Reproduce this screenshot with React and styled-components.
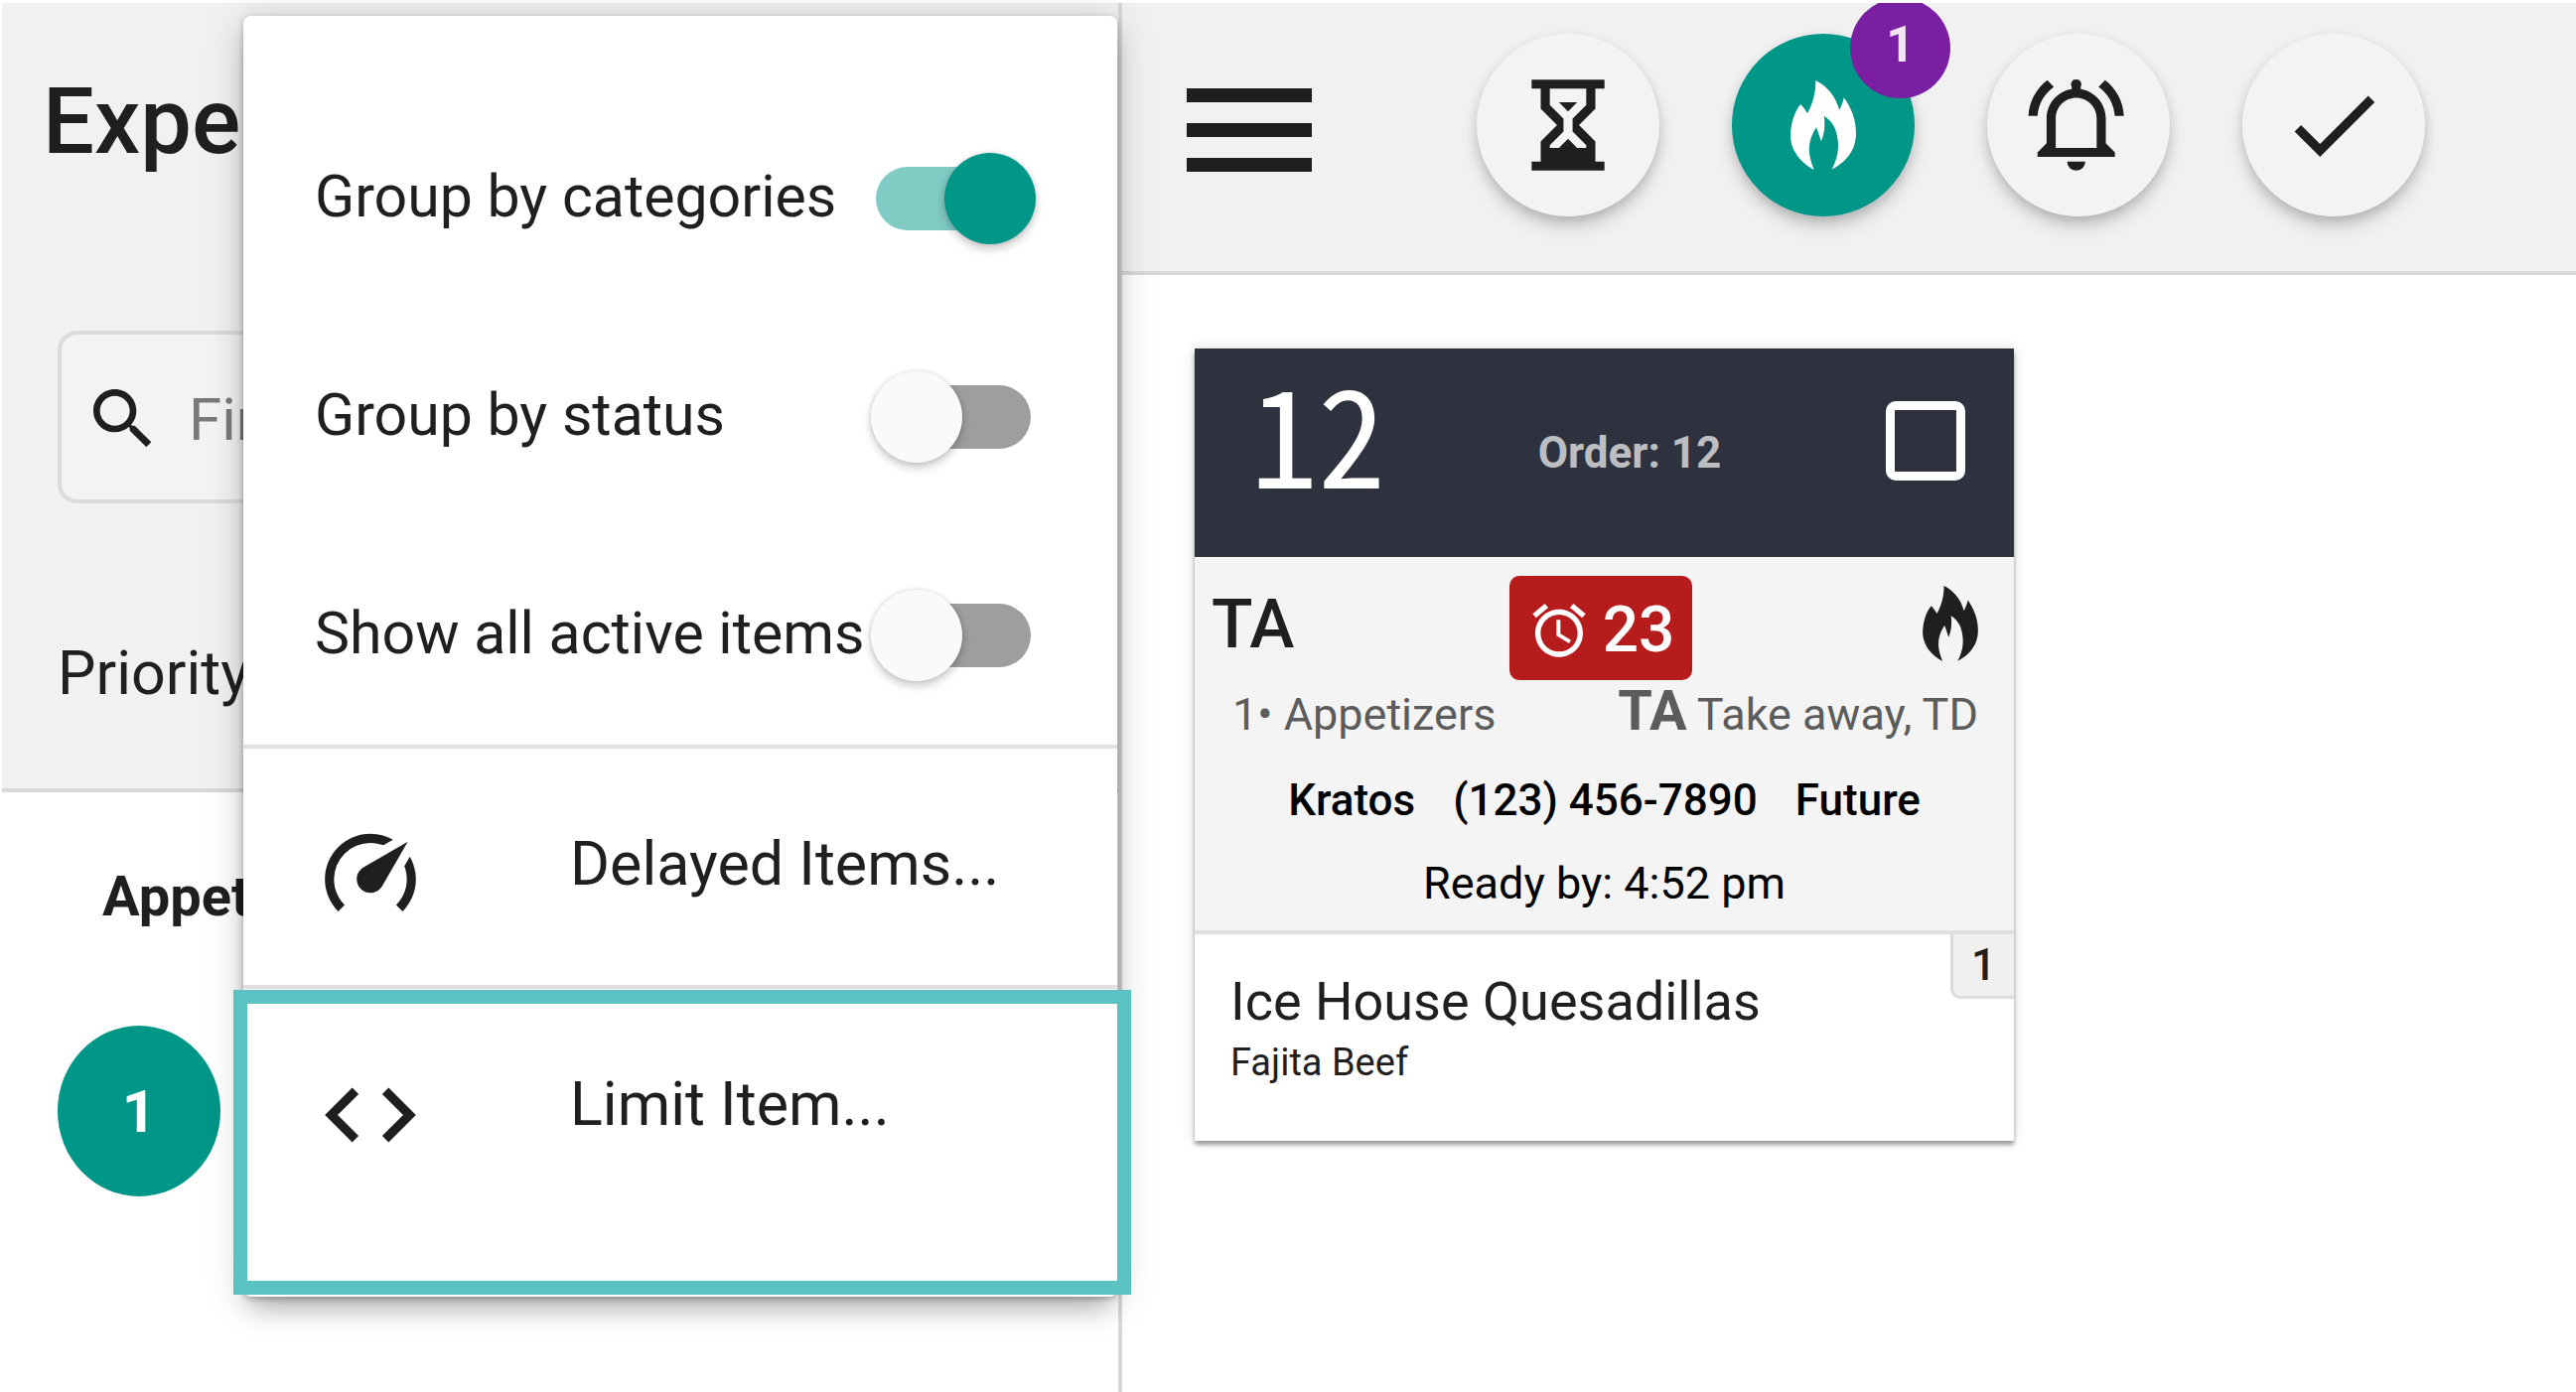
import React, { useState } from "react";
import styled, { createGlobalStyle, ThemeProvider } from "styled-components";

const theme = {
  teal: "#009688",
  tealLight: "#80cbc4",
  purple: "#7b1fa2",
  red: "#b71c1c",
  navy: "#2e323e",
  bar: "#f1f1f1",
  line: "#d8d8d8",
  ink: "#1f1f1f",
};

const GlobalStyles = createGlobalStyle`
  * {
    box-sizing: border-box;
  }
  body {
    margin: 0;
    background: #fff;
    color: ${theme.ink};
    font-family: Roboto, "Liberation Sans", sans-serif;
  }
  button, input {
    font: inherit;
    color: inherit;
    margin: 0;
    padding: 0;
    border: 0;
    background: none;
  }
  h1, h2, h3, p, ul {
    margin: 0;
    padding: 0;
    font-weight: 400;
    list-style: none;
  }
  svg {
    display: block;
    fill: currentColor;
  }
`;

//Layout
const Page = styled.div`
  position: relative;
  display: flex;
  min-height: 100vh;
  padding: 3px 0 0 2px;
  overflow: hidden;
`;

const Sidebar = styled.aside`
  flex: 0 0 1128px;
  border-right: 4px solid ${(p) => p.theme.line};
`;

const Main = styled.main`
  flex: 1;
  min-width: 0;
`;

//Sidebar
const SideHeader = styled.header`
  padding: 66px 56px 80px;
  background: ${(p) => p.theme.bar};
  border-bottom: 4px solid ${(p) => p.theme.line};
`;

const Title = styled.h1`
  margin-left: -15px;
  font-size: 92px;
  font-weight: 500;
  line-height: 108px;
`;

const SearchBox = styled.label`
  display: flex;
  align-items: center;
  gap: 26px;
  height: 174px;
  margin-top: 156px;
  padding: 4px 22px 0;
  border: 4px solid #dcdcdc;
  border-radius: 20px;
  background: #f3f3f3;
`;

const SearchInput = styled.input`
  flex: 1;
  font-size: 60px;
  outline: none;
  &::placeholder {
    color: #7a7a7a;
    opacity: 1;
  }
`;

const Priority = styled.p`
  margin-top: 135px;
  font-size: 61px;
  line-height: 72px;
`;

const Section = styled.section`
  padding: 73px 56px;
`;

const SectionTitle = styled.h2`
  margin-left: 45px;
  font-size: 56px;
  font-weight: 700;
  line-height: 64px;
`;

const Count = styled.div`
  display: flex;
  align-items: center;
  justify-content: center;
  width: 164px;
  height: 172px;
  margin-top: 98px;
  border-radius: 50%;
  background: ${(p) => p.theme.teal};
  color: #fff;
  font-size: 60px;
  font-weight: 700;
`;

//Toolbar
const Toolbar = styled.header`
  display: flex;
  height: 274px;
  padding: 31px 0 0 65px;
  background: ${(p) => p.theme.bar};
  border-bottom: 4px solid ${(p) => p.theme.line};
  overflow: hidden;
`;

const MenuButton = styled.button`
  height: 184px;
  margin-right: 166px;
  padding-top: 10px;
`;

const Fabs = styled.nav`
  display: flex;
  gap: 73px;
`;

const Fab = styled.button`
  position: relative;
  display: flex;
  align-items: center;
  justify-content: center;
  width: 184px;
  height: 184px;
  border-radius: 50%;
  background: ${(p) => (p.$active ? p.theme.teal : "#f3f3f3")};
  color: ${(p) => (p.$active ? "#fff" : p.theme.ink)};
  box-shadow: 0 12px 20px -4px rgba(0, 0, 0, 0.2), 0 4px 12px rgba(0, 0, 0, 0.12);
`;

const Badge = styled.span`
  position: absolute;
  top: -36px;
  right: -36px;
  width: 101px;
  height: 101px;
  border-radius: 50%;
  background: ${(p) => p.theme.purple};
  color: #f3e5f5;
  font-size: 50px;
  font-weight: 700;
  line-height: 94px;
  text-align: center;
`;

//Order card
const Card = styled.article`
  width: 825px;
  margin: 74px 73px;
  background: #fff;
  box-shadow: 0 4px 4px rgba(0, 0, 0, 0.35), 0 0 12px rgba(0, 0, 0, 0.14);
`;

const CardHeader = styled.header`
  display: flex;
  align-items: center;
  justify-content: space-between;
  height: 210px;
  padding: 0 49px 0 56px;
  background: ${(p) => p.theme.navy};
  color: #fff;
`;

const Table = styled.h2`
  font-family: "Noto Sans CJK JP", sans-serif;
  font-size: 136px;
  line-height: 168px;
  font-feature-settings: "hwid";
  padding-bottom: 46px;
`;

const OrderNo = styled.p`
  margin-right: 12px;
  color: rgba(255, 255, 255, 0.7);
  font-size: 44px;
  font-weight: 700;
`;

const SelectBox = styled.input`
  appearance: none;
  width: 80px;
  height: 80px;
  margin-bottom: 24px;
  border: 9px solid #fff;
  border-radius: 10px;
`;

const CardBody = styled.div`
  padding: 19px 0 6px;
  background: #f4f4f4;
  border-bottom: 4px solid #e0e0e0;
`;

const StatusRow = styled.div`
  display: grid;
  grid-template-columns: 1fr auto 1fr;
  align-items: center;
  height: 105px;
  padding: 0 24px 0 17px;
  & > :last-child {
    justify-self: end;
    margin-right: 12px;
    margin-bottom: 10px;
  }
`;

const OrderType = styled.span`
  font-size: 68px;
  font-weight: 500;
  line-height: 84px;
  padding-bottom: 8px;
`;

const Timer = styled.div`
  display: flex;
  align-items: center;
  justify-content: center;
  gap: 12px;
  height: 105px;
  width: 184px;
  padding-top: 4px;
  border-radius: 10px;
  background: ${(p) => p.theme.red};
  color: #fff;
  font-size: 64px;
  font-weight: 500;
`;

const MetaRow = styled.div`
  display: flex;
  align-items: baseline;
  justify-content: space-between;
  padding: 0 36px 0 38px;
  color: #5c5c5c;
  font-size: 45px;
  line-height: 62px;
`;

const MetaType = styled.b`
  font-size: 56px;
  font-weight: 700;
`;

const Customer = styled.div`
  padding-top: 14px;
  color: #000;
  font-size: 45px;
  line-height: 83px;
`;

const CustomerRow = styled.p`
  display: flex;
  justify-content: center;
  gap: 38px;
`;

const CustomerField = styled.span`
  font-size: 44px;
  font-weight: 500;
`;

const Item = styled.div`
  position: relative;
  padding: 34px 36px 52px;
`;

const ItemName = styled.h3`
  font-size: 54px;
  line-height: 68px;
`;

const ItemNote = styled.p`
  font-size: 38px;
  line-height: 54px;
`;

const Quantity = styled.span`
  position: absolute;
  top: 0;
  right: 0;
  width: 64px;
  height: 65px;
  border: solid #dcdcdc;
  border-width: 0 0 3px 3px;
  border-bottom-left-radius: 10px;
  background: #f0f0f0;
  font-size: 44px;
  font-weight: 500;
  line-height: 62px;
  text-align: center;
`;

//Settings menu
const Menu = styled.div`
  position: absolute;
  top: 16px;
  left: 245px;
  width: 880px;
  padding: 74px 0 72px;
  border-radius: 8px;
  background: #fff;
  box-shadow: 0 18px 24px -8px rgba(0, 0, 0, 0.24), 0 4px 40px rgba(0, 0, 0, 0.18), 0 2px 6px rgba(0, 0, 0, 0.26);
`;

const ToggleRow = styled.label`
  display: flex;
  align-items: center;
  justify-content: space-between;
  height: 220px;
  padding: 0 87px 0 72px;
  font-size: 59px;
  white-space: nowrap;
`;

const ToggleText = styled.span`
  padding-bottom: 5px;
`;

const Toggle = styled.input.attrs({ type: "checkbox", role: "switch" })`
  appearance: none;
  display: flex;
  align-items: center;
  width: 156px;
  height: 64px;
  border-radius: 32px;
  background: #9e9e9e;
  &::before {
    content: "";
    flex: none;
    width: 92px;
    height: 92px;
    margin-left: -5px;
    border-radius: 50%;
    background: #fafafa;
    box-shadow: 0 5px 10px rgba(0, 0, 0, 0.2), 0 0 5px rgba(0, 0, 0, 0.12);
  }
  &:checked {
    background: ${(p) => p.theme.tealLight};
  }
  &:checked::before {
    margin-left: 69px;
    background: ${(p) => p.theme.teal};
  }
`;

const MenuItem = styled.li`
  position: relative;
  border-top: 4px solid #e0e0e0;
`;

const MenuAction = styled.button`
  display: flex;
  width: 100%;
  height: 238px;
  padding: 72px 73px;
  gap: 146px;
  font-size: 61px;
  line-height: 88px;
  text-align: left;
  white-space: nowrap;
`;

const Highlight = styled.span`
  position: absolute;
  top: 1px;
  right: -14px;
  bottom: -70px;
  left: -10px;
  border: 14px solid #5bc2c3;
  pointer-events: none;
`;

//Icons
const Icon = ({ d, size = 110, box = "0 0 24 24", height = size }) => (
  <svg width={size} height={height} viewBox={box} aria-hidden="true">
    <path d={d} />
  </svg>
);

const icons = {
  search: "M15.5 14h-.79l-.28-.27C15.41 12.59 16 11.11 16 9.5 16 5.91 13.09 3 9.5 3S3 5.91 3 9.5 5.91 16 9.5 16c1.61 0 3.09-.59 4.23-1.57l.27.28v.79l5 4.99L20.49 19l-4.99-5zm-6 0C7.01 14 5 11.99 5 9.5S7.01 5 9.5 5 14 7.01 14 9.5 11.99 14 9.5 14z",
  menu: "M3 18h18v-2H3v2zm0-5h18v-2H3v2zm0-7v2h18V6H3z",
  sand: "M20 2V4H18V8.41L14.41 12L18 15.59V20H20V22H4V20H6V15.59L9.59 12L6 8.41V4H4V2H20M16 16.41L13 13.41V10.59L16 7.59V4H8V7.59L11 10.59V13.41L8 16.41V17H10L12 15L14 17H16V16.41M12 9L10 7H14L12 9Z",
  flame: "M115 32C150 50 175 80 185 120C191 110 196 97 199 83C222 115 235 150 235 190C235 240 205 275 163 297C180 265 185 235 180 205C176 175 165 155 140 138C143 165 142 190 131 213C127 200 122 185 117 172C98 200 92 230 98 260C101 275 106 285 110 298C75 280 42 245 40 200C40 160 52 125 70 103C77 110 84 119 90 130C108 100 115 65 115 32Z",
  bell: "M16 17V10.5C16 8 14 6 11.5 6C9 6 7 8 7 10.5V17H16M18 16L20 18V19H3V18L5 16V10.5C5 7.29 7.36 4.6 10.5 4.08V3.5A1 1 0 0 1 11.5 2A1 1 0 0 1 12.5 3.5V4.08C15.64 4.6 18 7.29 18 10.5V16M11.5 22A2 2 0 0 1 9.5 20H13.5A2 2 0 0 1 11.5 22M19.97 10C19.82 7.35 18.46 5 16.42 3.58L17.85 2.15C20.24 3.97 21.82 6.79 21.97 10H19.97M6.58 3.58C4.54 5 3.18 7.35 3 10H1C1.18 6.79 2.76 3.97 5.15 2.15L6.58 3.58Z",
  check: "M9 16.17 4.83 12l-1.42 1.41L9 19 21 7l-1.41-1.41z",
  alarm: "M22 5.72l-4.6-3.86-1.29 1.53 4.6 3.86L22 5.72zM7.88 3.39L6.6 1.86 2 5.71l1.29 1.53 4.59-3.85zM12.5 8H11v6l4.75 2.85.75-1.23-4-2.37V8zM12 4c-4.97 0-9 4.03-9 9s4.02 9 9 9c4.97 0 9-4.03 9-9s-4.03-9-9-9zm0 16c-3.87 0-7-3.13-7-7s3.13-7 7-7 7 3.13 7 7-3.13 7-7 7z",
  gauge: "M12 16A3 3 0 0 1 9 13C9 11.88 9.61 10.9 10.5 10.39L20.21 4.77L14.68 14.35C14.18 15.33 13.17 16 12 16M12 3C13.81 3 15.5 3.5 16.97 4.32L14.87 5.53C14 5.19 13 5 12 5A8 8 0 0 0 4 13C4 15.21 4.89 17.21 6.34 18.65L4.93 20.07C3.12 18.26 2 15.76 2 13A10 10 0 0 1 12 3M22 13C22 15.76 20.88 18.26 19.07 20.07L17.66 18.65C19.11 17.2 20 15.21 20 13C20 12 19.81 11 19.46 10.1L20.67 8C21.5 9.5 22 11.18 22 13Z",
  code: "M9.4 16.6L4.8 12l4.6-4.6L8 6l-6 6 6 6 1.4-1.4zm5.2 0l4.6-4.6-4.6-4.6L16 6l6 6-6 6-1.4-1.4z",
};

const flameBox = "40 32 195 266";

const toggles = [
  { id: "categories", text: "Group by categories" },
  { id: "status", text: "Group by status" },
  { id: "active", text: "Show all active items" },
];

function SettingsMenu() {
  const [on, setOn] = useState({ categories: true, status: false, active: false });

  return (
    <Menu>
      {toggles.map(({ id, text }) => (
        <ToggleRow key={id} htmlFor={id}>
          <ToggleText>{text}</ToggleText>
          <Toggle id={id} checked={on[id]} onChange={() => setOn({ ...on, [id]: !on[id] })} />
        </ToggleRow>
      ))}
      <ul>
        <MenuItem>
          <MenuAction type="button">
            <Icon d={icons.gauge} />
            Delayed Items...
          </MenuAction>
        </MenuItem>
        <MenuItem>
          <MenuAction type="button">
            <Icon d={icons.code} />
            Limit Item...
          </MenuAction>
          <Highlight />
        </MenuItem>
      </ul>
    </Menu>
  );
}

function OrderCard() {
  return (
    <Card>
      <CardHeader>
        <Table>12</Table>
        <OrderNo>Order: 12</OrderNo>
        <SelectBox type="checkbox" aria-label="Select order 12" />
      </CardHeader>
      <CardBody>
        <StatusRow>
          <OrderType>TA</OrderType>
          <Timer>
            <Icon d={icons.alarm} size={64} />
            23
          </Timer>
          <Icon d={icons.flame} box={flameBox} size={56} height={76} />
        </StatusRow>
        <MetaRow>
          <span>1• Appetizers</span>
          <span><MetaType>TA</MetaType> Take away, TD</span>
        </MetaRow>
        <Customer>
          <CustomerRow>
            <CustomerField>Kratos</CustomerField>
            <CustomerField>(123) 456-7890</CustomerField>
            <CustomerField>Future</CustomerField>
          </CustomerRow>
          <CustomerRow>Ready by: 4:52 pm</CustomerRow>
        </Customer>
      </CardBody>
      <Item>
        <ItemName>Ice House Quesadillas</ItemName>
        <ItemNote>Fajita Beef</ItemNote>
        <Quantity>1</Quantity>
      </Item>
    </Card>
  );
}

function App() {
  return (
    <ThemeProvider theme={theme}>
      <GlobalStyles/>
      <Page>
        <Sidebar>
          <SideHeader>
            <Title>Expeditor</Title>
            <SearchBox>
              <Icon d={icons.search} size={80} />
              <SearchInput type="text" placeholder="Find" aria-label="Find" />
            </SearchBox>
            <Priority>Priority</Priority>
          </SideHeader>
          <Section>
            <SectionTitle>Appetizers</SectionTitle>
            <Count>1</Count>
          </Section>
        </Sidebar>
        <Main>
          <Toolbar>
            <MenuButton type="button" aria-label="Menu">
              <Icon d={icons.menu} box="3 6 18 12" size={126} height={84} />
            </MenuButton>
            <Fabs>
              <Fab type="button" aria-label="Waiting"><Icon d={icons.sand} /></Fab>
              <Fab type="button" aria-label="Fired" $active>
                <Icon d={icons.flame} box={flameBox} size={66} height={90} />
                <Badge>1</Badge>
              </Fab>
              <Fab type="button" aria-label="Ready"><Icon d={icons.bell} /></Fab>
              <Fab type="button" aria-label="Done"><Icon d={icons.check} /></Fab>
            </Fabs>
          </Toolbar>
          <OrderCard/>
        </Main>
        <SettingsMenu/>
      </Page>
    </ThemeProvider>
  );
}

export default App;
